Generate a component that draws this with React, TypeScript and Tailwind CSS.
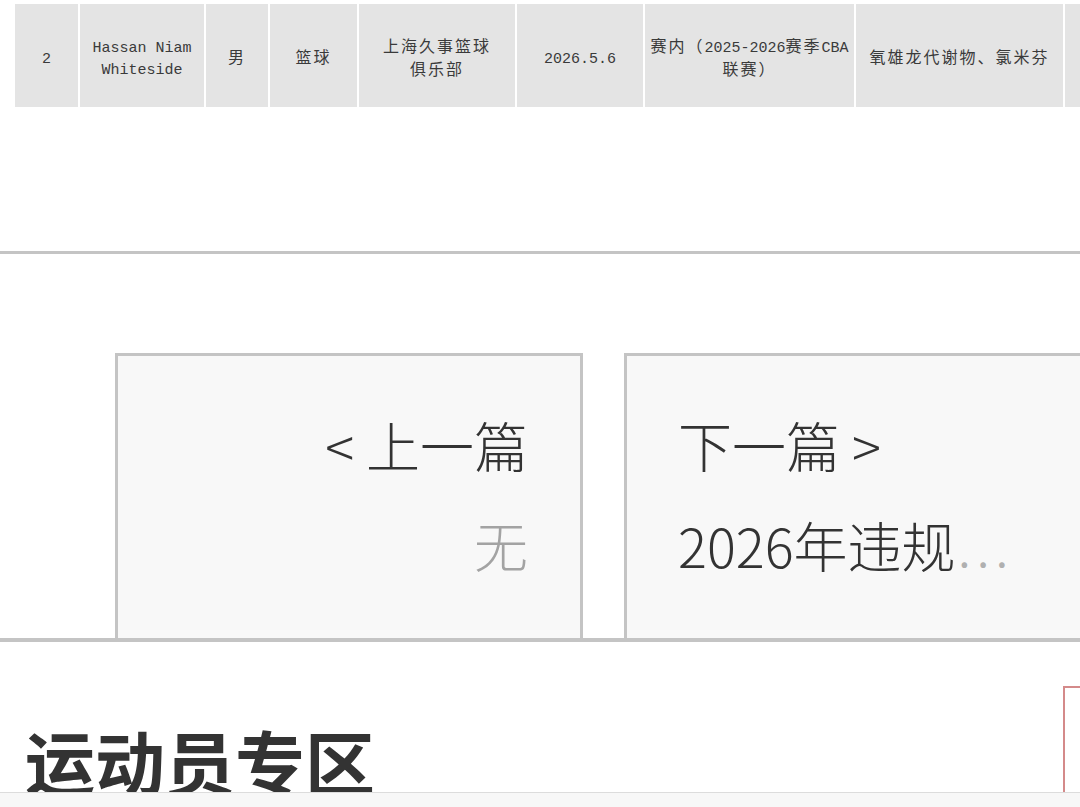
import type { ReactNode } from "react";

const CJK = /([\u3000-\u303f\u4e00-\u9fff\uff00-\uffef]+)/;

// table text: latin runs in a mono face, CJK runs a touch larger with spacing
function Mixed({ text }: { text: string }) {
  const parts = text.split(CJK).filter(Boolean);
  return (
    <>
      {parts.map((p, i) =>
        CJK.test(p) ? (
          <span key={i} className="text-[16px] tracking-[2px]">
            {p}
          </span>
        ) : (
          <span key={i}>{p}</span>
        )
      )}
    </>
  );
}

function Cell({ children }: { children: ReactNode }) {
  return (
    <div className="flex items-center justify-center bg-[#e4e4e4] px-[5px] pt-[8px] text-center text-[15px] leading-[22px] text-[#3a3a3a]">
      <div>{children}</div>
    </div>
  );
}

const row = [
  "2",
  "Hassan Niam Whiteside",
  "男",
  "篮球",
  "上海久事篮球俱乐部",
  "2026.5.6",
  "赛内（2025-2026赛季CBA联赛）",
  "氧雄龙代谢物、氯米芬",
  "",
];

export default function App() {
  return (
    <div
      className="relative h-[807px] overflow-hidden bg-white"
      style={{ fontFamily: '"Liberation Mono", "Noto Sans CJK SC", monospace' }}
    >
      {/* result table, last row */}
      <div className="pt-[4px] pl-[15px]">
        <div className="grid h-[103px] grid-cols-[63px_124px_62px_87px_156px_126px_209px_207px_120px] gap-x-[2px]">
          <Cell>{row[0]}</Cell>
          <Cell>
            Hassan Niam
            <br />
            Whiteside
          </Cell>
          <Cell>
            <Mixed text={row[2]} />
          </Cell>
          <Cell>
            <Mixed text={row[3]} />
          </Cell>
          <Cell>
            <Mixed text="上海久事篮球" />
            <br />
            <Mixed text="俱乐部" />
          </Cell>
          <Cell>{row[5]}</Cell>
          <Cell>
            <Mixed text="赛内（2025-2026赛季CBA" />
            <br />
            <Mixed text="联赛）" />
          </Cell>
          <Cell>
            <Mixed text={row[7]} />
          </Cell>
          <Cell>{row[8]}</Cell>
        </div>
      </div>

      <div className="mt-[144px] h-[3px] bg-[#c4c4c4]" />

      {/* prev / next */}
      <div
        className="mt-[99px] flex gap-[41px] pl-[115px] font-light text-[#333]"
        style={{ fontFamily: '"Noto Sans CJK SC", "Noto Sans", sans-serif' }}
      >
        <a className="block h-[285px] w-[468px] shrink-0 border-[3px] border-b-0 border-[#c4c4c4] bg-[#f8f8f8] pt-[39px] pr-[52px] text-right text-[54px] leading-[100px]">
          <div>&lt; 上一篇</div>
          <div className="text-[#a3a3a3]">无</div>
        </a>
        <a className="block h-[285px] w-[468px] shrink-0 border-[3px] border-b-0 border-[#c4c4c4] bg-[#f8f8f8] pt-[39px] pl-[51px] text-[54px] leading-[100px]">
          <div>下一篇 &gt;</div>
          <div>
            2026年违规
            <span className="ml-[4px] text-[30px] font-bold tracking-[9px] text-[#b0b0b0]">...</span>
          </div>
        </a>
      </div>

      <div className="h-[4px] bg-[#c4c4c4]" />

      {/* athletes section */}
      <div className="flex items-start justify-between">
        <h2
          className="mt-[84px] pl-[25px] text-[70px] leading-none font-bold text-[#333]"
          style={{ fontFamily: '"Noto Sans CJK SC", sans-serif' }}
        >
          运动员专区
        </h2>
        <div className="mt-[44px] -mr-[40px] h-[200px] w-[57px] shrink-0 border-t-[2px] border-l-[2px] border-[#d48a8a]" />
      </div>

      <div className="absolute inset-x-0 bottom-0 h-[15px] border-t border-[#dcdcdc] bg-[#f7f7f7]" />
    </div>
  );
}
